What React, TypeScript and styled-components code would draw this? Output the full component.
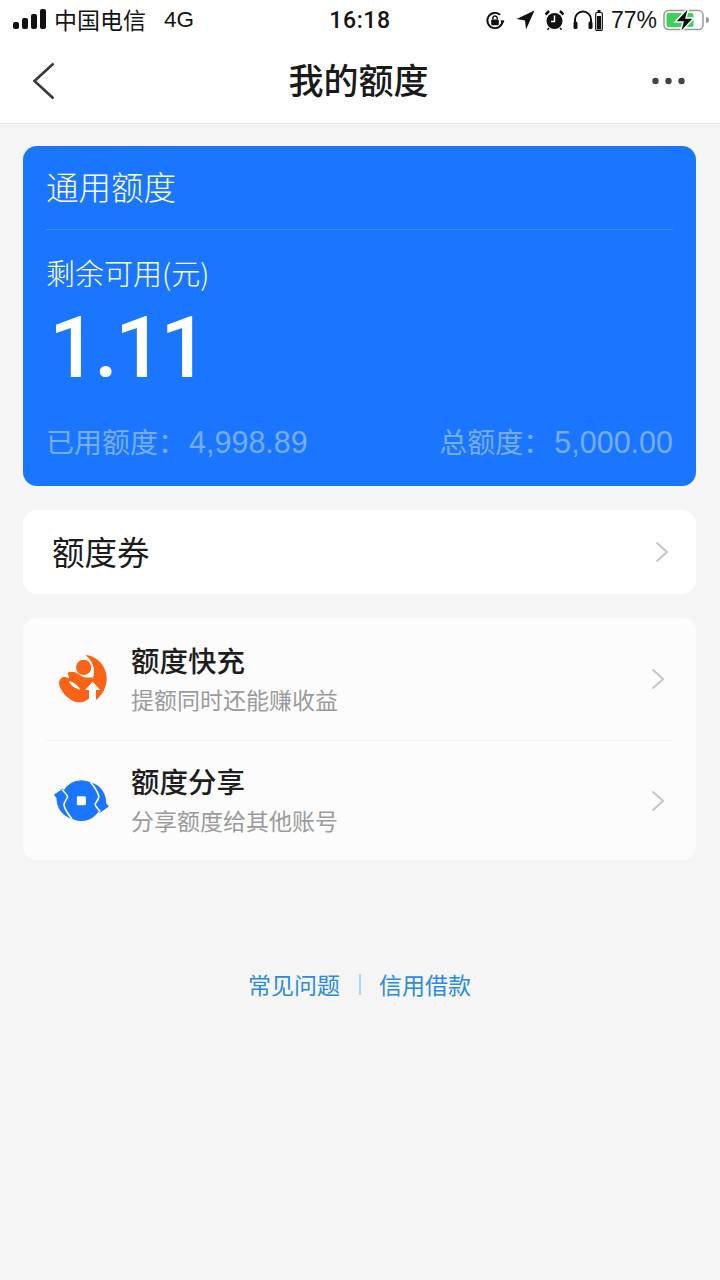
import React from 'react';
import styled, { createGlobalStyle } from 'styled-components';

const GlobalStyle = createGlobalStyle`
  html, body {
    margin: 0;
    padding: 0;
    background: #f5f5f6;
    font-family: "Liberation Sans", "Noto Sans CJK SC", sans-serif;
  }
`;

const Page = styled.div`
  width: 720px;
  height: 1280px;
  overflow: hidden;
  background: #f5f5f6;
`;

const Header = styled.header`
  background: #fff;
  height: 123px;
  border-bottom: 1px solid #e4e4e6;
`;

const StatusBar = styled.div`
  height: 40px;
  display: grid;
  grid-template-columns: 1fr auto 1fr;
  align-items: center;
  padding: 0 11px 0 13px;
  color: #151515;
  font-size: 23px;
`;

const StatusSide = styled.div`
  display: flex;
  align-items: center;
  justify-content: ${p => (p.$end ? 'flex-end' : 'flex-start')};
`;

const Carrier = styled.span`
  margin: 0 0 2px 7px;
  font-size: 23px;
`;

const Network = styled.span`
  margin-left: 18px;
  font-size: 22.5px;
`;

const Clock = styled.span`
  font-size: 23px;
  font-weight: 500;
  font-family: Roboto, sans-serif;
  letter-spacing: 0.6px;
  margin-right: 2px;
`;

const Percent = styled.span`
  margin: 0 6px 0 8px;
  font-size: 23px;
`;

const StatusIcon = styled.svg`
  display: block;
  flex: none;
  margin-left: ${p => p.$gap ?? 0}px;
`;

const NavBar = styled.div`
  height: 83px;
  display: grid;
  grid-template-columns: 1fr auto 1fr;
  align-items: center;
  padding: 0 35px 2px 32px;
  box-sizing: border-box;
`;

const NavEnd = styled.div`
  display: flex;
  justify-content: flex-end;
`;

const NavTitle = styled.h1`
  margin: 0 0 4px;
  font-size: 35px;
  line-height: 44px;
  font-weight: 500;
  color: #1a1a1a;
  font-family: "Noto Sans CJK SC", sans-serif;
`;

const Content = styled.main`
  padding: 22px 24px 0 23px;
  display: flex;
  flex-direction: column;
`;

const QuotaCard = styled.section`
  height: 340px;
  box-sizing: border-box;
  background: #1a76ff;
  border-radius: 14px;
  padding: 0 23px;
  color: #fff;
`;

const CardTitle = styled.div`
  height: 84px;
  box-sizing: border-box;
  padding: 0 0 4px;
  display: flex;
  align-items: center;
  font-size: 32.5px;
  font-family: "Noto Sans CJK SC", sans-serif;
  font-weight: 300;
  border-bottom: 1px solid #3a8bff;
`;

const Remaining = styled.div`
  margin: 23px 0 0;
  font-size: 29px;
  line-height: 38px;
  font-weight: 300;
  font-family: "Noto Sans CJK SC", sans-serif;
`;

const Amount = styled.div`
  margin: 15px 0 0 3px;
  height: 84px;
  font-family: Roboto, sans-serif;
  font-weight: 500;
  font-size: 85px;
  line-height: 84px;
  letter-spacing: -3px;
`;

const UsageRow = styled.div`
  margin: 33px 0 0;
  display: flex;
  justify-content: space-between;
  align-items: baseline;
  color: #76adff;
  font-size: 28px;
  line-height: 38px;
`;

const UsageValue = styled.span`
  margin-left: 3px;
  font-size: 30.5px;
`;

const Panel = styled.section`
  margin-top: 24px;
  background: ${p => (p.$soft ? '#fcfcfc' : '#fff')};
  border-radius: 14px;
`;

const CouponRow = styled.div`
  height: 84px;
  display: flex;
  align-items: center;
  justify-content: space-between;
  padding: 0 27px 0 29px;
  font-size: 32.5px;
  color: #1c1c1c;
  font-family: "Noto Sans CJK SC", sans-serif;
  font-weight: 400;
  line-height: 1;
`;

const CouponLabel = styled.span`
  margin-bottom: 2px;
`;

const FeatureRow = styled.div`
  box-sizing: border-box;
  height: ${p => (p.$first ? 122 : 120)}px;
  margin: 0 23px;
  padding-right: 8px;
  display: flex;
  align-items: center;
  border-top: ${p => (p.$first ? 'none' : '1px solid #f1f1f2')};
`;

const FeatureIcon = styled.div`
  width: 64px;
  margin: 0 17px 0 4px;
  display: flex;
  justify-content: center;
`;

const FeatureText = styled.div`
  flex: 1;
  margin-bottom: 1px;
  font-family: "Noto Sans CJK SC", sans-serif;
`;

const FeatureTitle = styled.div`
  font-size: 28.5px;
  line-height: 40px;
  font-weight: 500;
  color: #1e1e1e;
`;

const FeatureHint = styled.div`
  font-size: 23px;
  line-height: 38px;
  color: #9b9b9b;
`;

const Chevron = styled.svg`
  display: block;
  flex: none;
`;

const FooterLinks = styled.nav`
  margin-top: 106px;
  display: flex;
  justify-content: center;
  align-items: center;
  color: #2c8cdc;
  font-size: 23px;
  line-height: 36px;
  font-family: "Noto Sans CJK SC", sans-serif;
`;

const LinkDivider = styled.span`
  width: 2px;
  height: 21px;
  margin: 0 18px 0 19px;
  background: #b0d2ec;
`;

const ChevronRight = () => (
  <Chevron width="14" height="22" viewBox="0 0 14 22">
    <path d="M1.5 1.5 12 11 1.5 20.5" fill="none" stroke="#c6c6c8" strokeWidth="2" />
  </Chevron>
);

const SignalIcon = () => (
  <StatusIcon width="34" height="20" viewBox="0 0 34 20" style={{ marginBottom: 2 }}>
    <rect x="0" y="13" width="6" height="7" rx="2" fill="#111" />
    <rect x="9" y="9" width="6" height="11" rx="2" fill="#111" />
    <rect x="18" y="5" width="6" height="15" rx="2" fill="#111" />
    <rect x="27" y="0" width="6" height="20" rx="2" fill="#111" />
  </StatusIcon>
);

const OrientationIcon = () => (
  <StatusIcon width="20" height="21" viewBox="0 0 21 21">
    <path d="M18.5 10.5a8 8 0 1 1-2.6-5.9" fill="none" stroke="#111" strokeWidth="2" />
    <path d="M20.5 10.5 16 10.5 18.5 14.5Z" fill="#111" />
    <rect x="6.5" y="9.5" width="8" height="6" rx="1" fill="#111" />
    <path d="M8.2 9.5V8a2.3 2.3 0 0 1 4.6 0v1.5" fill="none" stroke="#111" strokeWidth="1.5" />
  </StatusIcon>
);

const LocationIcon = () => (
  <StatusIcon $gap={11} width="19" height="20" viewBox="0 0 19 20">
    <path d="M18.5 0.5 0.5 9 9 10.5 10 19.5Z" fill="#111" />
  </StatusIcon>
);

const AlarmIcon = () => (
  <StatusIcon $gap={10} width="19" height="20" viewBox="0 0 19 20">
    <circle cx="9.5" cy="11" r="8" fill="#111" />
    <path d="M9.5 5.5V11.5H6" fill="none" stroke="#fff" strokeWidth="1.5" />
    <path d="M0.5 4.5 4 1M18.5 4.5 15 1" stroke="#111" strokeWidth="2.6" />
    <path d="M4 18 2.5 19.8M15 18l1.5 1.8" stroke="#111" strokeWidth="1.5" />
  </StatusIcon>
);

const HeadphoneIcon = () => (
  <StatusIcon $gap={9} width="20" height="20" viewBox="0 0 20 20">
    <path d="M2 14V9.5a8 8 0 0 1 16 0V14" fill="none" stroke="#111" strokeWidth="2" />
    <rect x="0.5" y="11.5" width="4" height="7.5" rx="1.5" fill="#111" />
    <rect x="15.5" y="11.5" width="4" height="7.5" rx="1.5" fill="#111" />
  </StatusIcon>
);

const HeadsetBatteryIcon = () => (
  <StatusIcon $gap={2} width="8" height="21" viewBox="0 0 8 21">
    <rect x="2.5" y="0" width="3" height="2" fill="#111" />
    <rect x="0.7" y="2.5" width="6.6" height="18" rx="1.2" fill="none" stroke="#111" strokeWidth="1.2" />
    <rect x="2" y="6" width="4" height="13.5" fill="#111" />
  </StatusIcon>
);

const BatteryIcon = () => (
  <StatusIcon width="46" height="26" viewBox="0 0 46 26">
    <rect x="1" y="3.5" width="39" height="19" rx="4.5" fill="none" stroke="#9a9a9a" strokeWidth="1.5" />
    <rect x="3.5" y="6" width="27" height="14" rx="2" fill="#3fd25b" />
    <path d="M43 10v6c2 0 3-1 3-3s-1-3-3-3Z" fill="#9a9a9a" />
    <path d="M26 0 12 15h8l-3 11 14-15h-8l3-11Z" fill="#111" stroke="#fff" strokeWidth="1.4" />
  </StatusIcon>
);

const BackIcon = () => (
  <svg width="24" height="38" viewBox="0 0 24 38" style={{ display: 'block' }}>
    <path d="M21.5 1.5 2.5 19l19 17.5" fill="none" stroke="#3a3a3a" strokeWidth="2.6" />
  </svg>
);

const MoreIcon = () => (
  <svg width="33" height="8" viewBox="0 0 33 8" style={{ display: 'block' }}>
    <circle cx="3.5" cy="4" r="3.2" fill="#444" />
    <circle cx="16.5" cy="4" r="3.2" fill="#444" />
    <circle cx="29.5" cy="4" r="3.2" fill="#444" />
  </svg>
);

const BoostIcon = () => (
  <svg width="62" height="58" viewBox="0 0 186 174" style={{ display: 'block' }}>
    <path d="M103 15C140 18 167 50 167 85 167 115 152 138 133 152L122 92C136 70 130 35 103 15Z" fill="#fa6316" />
    <circle cx="98" cy="52" r="23" fill="#fa6316" />
    <path
      d="M50 68C60 62 76 66 86 74 96 83 108 84 124 82L134 120 113 146C100 158 80 160 65 152 45 142 26 120 24 100 24 84 38 76 50 84 56 88 54 80 50 68Z"
      fill="#fa6316"
    />
    <path d="M54 94C60 108 72 116 88 119 80 106 68 96 54 94Z" fill="#fff" />
    <path d="M125 95 148 120H135V154H114V120H102Z" fill="#fff" />
  </svg>
);

const ShareIcon = () => (
  <svg width="66" height="54" viewBox="0 0 198 162" style={{ display: 'block' }}>
    <circle cx="97" cy="80" r="63" fill="#1a76ff" />
    <path d="M12 62 40 42 56 66 40 92 66 136C40 128 20 105 20 72Z" fill="#1a76ff" />
    <path d="M182 98 154 118 138 94 154 68 128 24C154 32 174 55 174 88Z" fill="#1a76ff" />
    <path d="M38 46C46 56 56 64 54 70 50 78 42 86 43 94 47 108 56 122 68 136" fill="none" stroke="#fff" strokeWidth="5" />
    <path d="M156 114C148 104 138 96 140 90 144 82 152 74 151 66 147 52 138 38 126 24" fill="none" stroke="#fff" strokeWidth="5" />
    <rect x="83" y="66" width="28" height="28" rx="4" fill="#fff" />
  </svg>
);

const App = () => (
  <Page>
    <GlobalStyle />
    <Header>
      <StatusBar>
        <StatusSide>
          <SignalIcon />
          <Carrier>中国电信</Carrier>
          <Network>4G</Network>
        </StatusSide>
        <Clock>16:18</Clock>
        <StatusSide $end>
          <OrientationIcon />
          <LocationIcon />
          <AlarmIcon />
          <HeadphoneIcon />
          <HeadsetBatteryIcon />
          <Percent>77%</Percent>
          <BatteryIcon />
        </StatusSide>
      </StatusBar>
      <NavBar>
        <BackIcon />
        <NavTitle>我的额度</NavTitle>
        <NavEnd><MoreIcon /></NavEnd>
      </NavBar>
    </Header>
    <Content>
      <QuotaCard>
        <CardTitle>通用额度</CardTitle>
        <Remaining>剩余可用(元)</Remaining>
        <Amount>1.11</Amount>
        <UsageRow>
          <span>已用额度：<UsageValue>4,998.89</UsageValue></span>
          <span>总额度：<UsageValue>5,000.00</UsageValue></span>
        </UsageRow>
      </QuotaCard>
      <Panel>
        <CouponRow>
          <CouponLabel>额度券</CouponLabel>
          <ChevronRight />
        </CouponRow>
      </Panel>
      <Panel $soft>
        <FeatureRow $first>
          <FeatureIcon><BoostIcon /></FeatureIcon>
          <FeatureText>
            <FeatureTitle>额度快充</FeatureTitle>
            <FeatureHint>提额同时还能赚收益</FeatureHint>
          </FeatureText>
          <ChevronRight />
        </FeatureRow>
        <FeatureRow>
          <FeatureIcon><ShareIcon /></FeatureIcon>
          <FeatureText>
            <FeatureTitle>额度分享</FeatureTitle>
            <FeatureHint>分享额度给其他账号</FeatureHint>
          </FeatureText>
          <ChevronRight />
        </FeatureRow>
      </Panel>
      <FooterLinks>
        <span>常见问题</span>
        <LinkDivider />
        <span>信用借款</span>
      </FooterLinks>
    </Content>
  </Page>
);

export default App;
